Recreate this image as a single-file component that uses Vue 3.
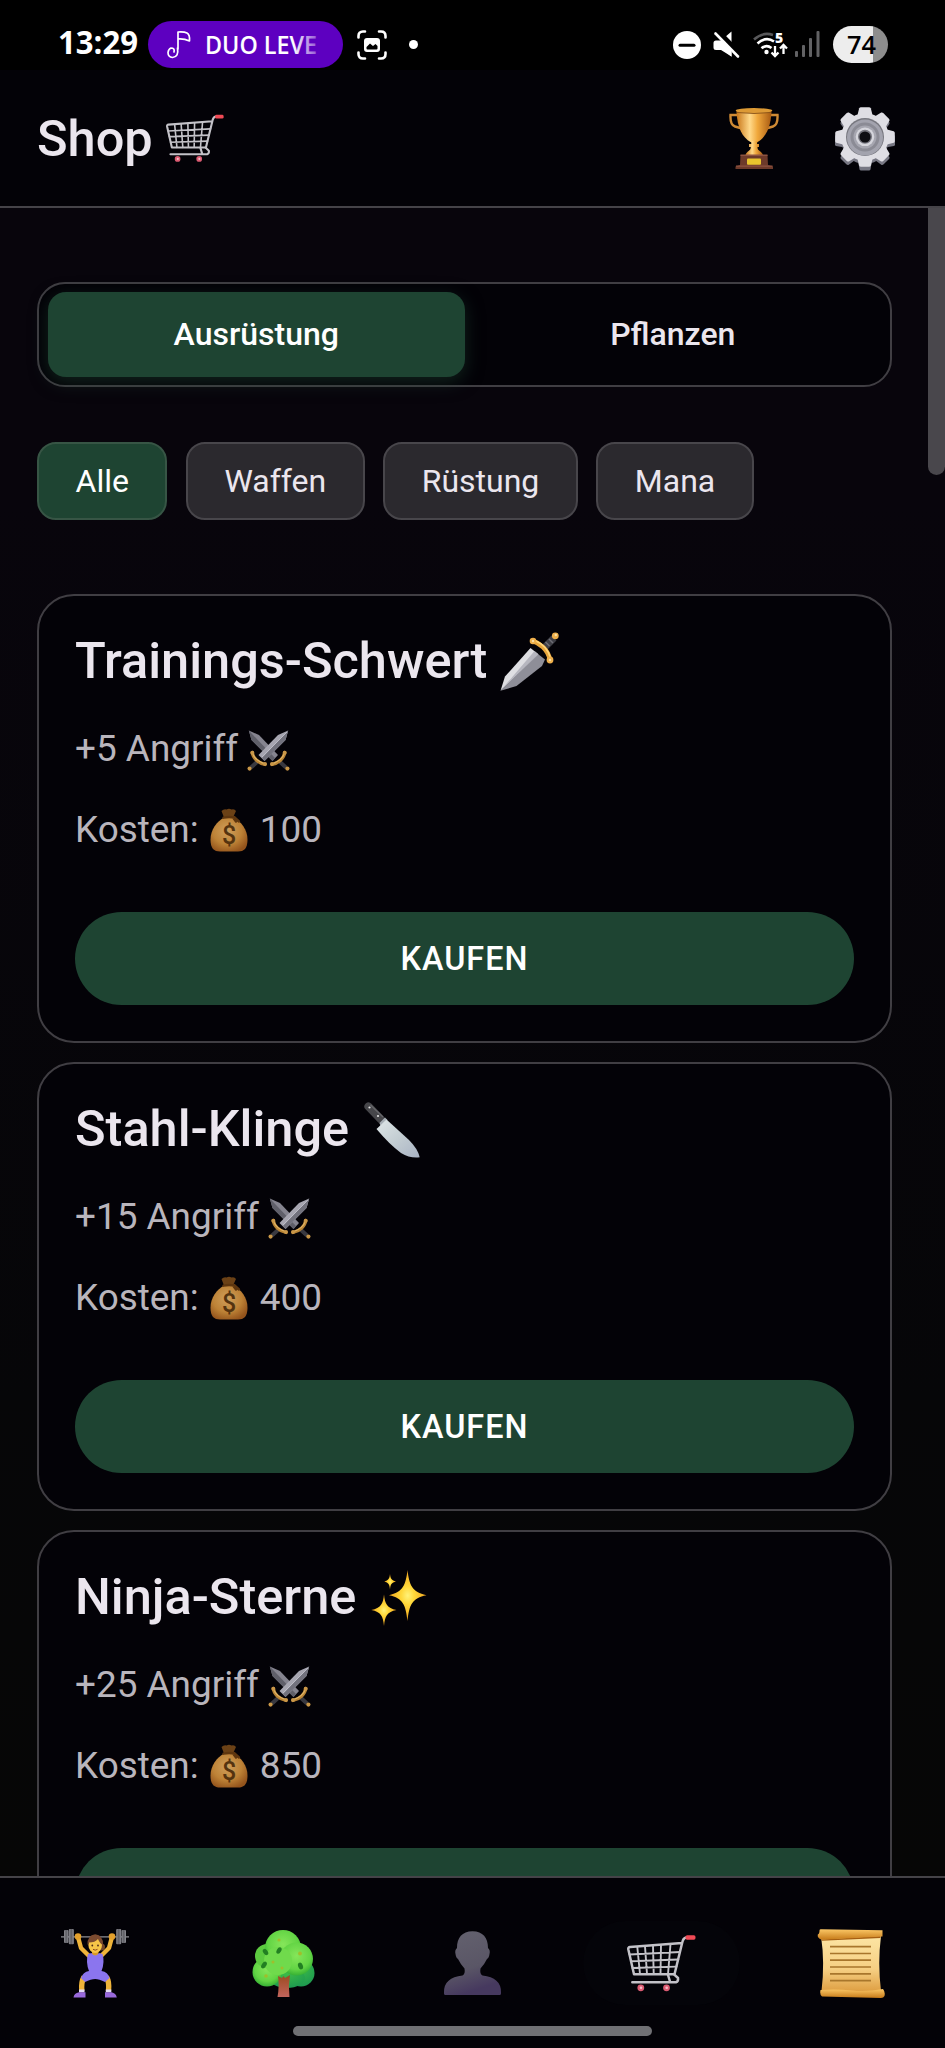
<script setup>
import { ref } from 'vue'

const tabs = ['Ausrüstung', 'Pflanzen']
const activeTab = ref('Ausrüstung')
const filters = ['Alle', 'Waffen', 'Rüstung', 'Mana']
const activeFilter = ref('Alle')
const items = [
  { name: 'Trainings-Schwert', icon: 'dagger', bonus: '+5 Angriff', cost: 100 },
  { name: 'Stahl-Klinge', icon: 'knife', bonus: '+15 Angriff', cost: 400 },
  { name: 'Ninja-Sterne', icon: 'sparkles', bonus: '+25 Angriff', cost: 850 },
]
const navItems = ['lifter', 'tree', 'bust', 'cart', 'scroll']
const activeNav = ref('cart')
</script>

<template>
  <div class="screen">
    <!-- Shared icon definitions -->
    <svg class="sprite" width="0" height="0" aria-hidden="true">
      <defs>
        <linearGradient id="gGold" x1="0" x2="1" y1="0" y2="0">
          <stop offset="0" stop-color="#c87618" /><stop offset=".38" stop-color="#ffd98a" />
          <stop offset=".6" stop-color="#f0a83c" /><stop offset="1" stop-color="#a85a12" />
        </linearGradient>
        <linearGradient id="gBlade" x1="0" x2="1" y1="0" y2="1">
          <stop offset="0" stop-color="#dfe6e8" /><stop offset=".5" stop-color="#c3cdd2" /><stop offset="1" stop-color="#a9b3c4" />
        </linearGradient>
        <radialGradient id="gStar">
          <stop offset="0" stop-color="#fff27a" /><stop offset=".35" stop-color="#ffd83a" /><stop offset="1" stop-color="#f0a31c" />
        </radialGradient>
        <radialGradient id="gBag" cx=".45" cy=".4" r=".65">
          <stop offset="0" stop-color="#cf9f5c" /><stop offset=".6" stop-color="#bd8236" /><stop offset="1" stop-color="#94541c" />
        </radialGradient>
        <radialGradient id="gLeaf" cx=".5" cy=".4" r=".6">
          <stop offset="0" stop-color="#86e65a" /><stop offset=".7" stop-color="#62d444" /><stop offset="1" stop-color="#36b034" />
        </radialGradient>
        <radialGradient id="gLeafDark" cx=".5" cy=".3" r=".7">
          <stop offset="0" stop-color="#3cba48" /><stop offset="1" stop-color="#1d9a50" />
        </radialGradient>
        <linearGradient id="gTrunk" x1="0" x2="0" y1="0" y2="1">
          <stop offset="0" stop-color="#9c4a20" /><stop offset="1" stop-color="#c2645c" />
        </linearGradient>
        <linearGradient id="gBust" x1="0" x2=".3" y1="0" y2="1">
          <stop offset="0" stop-color="#64626f" /><stop offset=".65" stop-color="#5a5666" /><stop offset="1" stop-color="#46395f" />
        </linearGradient>
        <linearGradient id="gPaper" x1="0" x2="0" y1="0" y2="1">
          <stop offset="0" stop-color="#fce5a4" /><stop offset=".6" stop-color="#f6cf83" /><stop offset="1" stop-color="#dfa044" />
        </linearGradient>
        <linearGradient id="gRoll" x1="0" x2="0" y1="0" y2="1">
          <stop offset="0" stop-color="#fbc766" /><stop offset="1" stop-color="#c67a18" />
        </linearGradient>
        <linearGradient id="gPlate" x1="0" x2="1" y1="0" y2="0">
          <stop offset="0" stop-color="#8a8a90" /><stop offset=".5" stop-color="#5e5e64" /><stop offset="1" stop-color="#8f8f96" />
        </linearGradient>
      </defs>

      <symbol id="cart" viewBox="0 0 69 57">
        <g fill="none" stroke="#c3c2c8" stroke-linecap="round" stroke-linejoin="round">
          <path stroke-width="2.5" d="M59 2.5Q56 3 55 8.5L47.5 39.2H7L1.3 14.2Q1 12.2 3 12L55 8" />
          <path stroke-width="1.9" d="M10.3 12L13 39M18 11.4L20 39M26 10.7L26.7 39M34 10L33.5 39M43.5 9L41 39M2.6 19.5L53 17M4 26.3L51.3 24.5M5.5 33L49.5 31.6" />
          <path stroke-width="2.5" d="M5.3 47.3H49Q51.5 46.5 51 43L47 39.3M41 40L43 46.5" />
        </g>
        <rect x="58.5" y=".3" width="10" height="4.4" rx="1.6" fill="#f04a55" />
        <g fill="#dc5b72"><circle cx="13.8" cy="52.8" r="3.4" /><circle cx="39.5" cy="52.8" r="3.4" /></g>
        <g fill="#f6bcc6"><circle cx="14" cy="52.8" r="1.3" /><circle cx="39.7" cy="52.8" r="1.3" /></g>
      </symbol>

      <symbol id="trophy" viewBox="0 0 50 61">
        <path fill="none" stroke="#cf8a34" stroke-width="2.4" d="M9 7H1.5Q1 17 6 18.5L13 20.5M41 7H48.5Q49 17 44 18.5L37 20.5" />
        <path fill="url(#gGold)" d="M7.5 3H42.5C42 20 36 30 28.5 34H21.5C14 30 8 20 7.5 3Z" />
        <ellipse cx="25" cy="2.6" rx="18.3" ry="2.6" fill="#dd9a35" />
        <path stroke="#875016" stroke-width=".9" d="M8 4.5Q25 6.5 42 4.5" fill="none" />
        <path fill="url(#gGold)" d="M22 33H28.5L28 36H30V39H28.5C28 43 33 43 34 47H16.5C17.5 43 22 43 21.8 39H20V36H22.3Z" />
        <path fill="#6d3a2a" d="M11.5 47H38.5L39 57L44 58.5V61H6.5V58.5L11 57Z" />
        <path fill="#8e5340" d="M11.5 46.5H38.5V48H11.5ZM7 57.5H43.5V58.7H7Z" />
        <rect x="18" y="50.5" width="14" height="6.3" rx="1" fill="#e8c42e" />
      </symbol>

      <symbol id="gear" viewBox="0 0 60 64">
        <g fill="#777783" transform="translate(30 33.5)">
          <circle r="23.5" />
          <path v-for="n in 8" :key="n" :transform="`rotate(${n * 45})`" d="M-7-20L-5.5-29Q-5-30-4-30H4Q5-30 5.5-29L7-20Z" />
        </g>
        <g fill="#dfdee4" transform="translate(30 30)">
          <circle r="23.8" />
          <path v-for="n in 8" :key="n" :transform="`rotate(${n * 45})`" d="M-8-20L-5.8-28.7Q-5.4-29.8-4-29.8H4Q5.4-29.8 5.8-28.7L8-20Z" />
        </g>
        <circle cx="30" cy="30" r="19" fill="#77777f" /><circle cx="30" cy="30.6" r="18" fill="#a3a3ae" />
        <circle cx="30" cy="30" r="14.5" fill="#8b8b95" /><circle cx="30" cy="30" r="11.5" fill="#a6a6b0" />
        <circle cx="30" cy="29.8" r="9.3" fill="#d5d5dc" /><circle cx="30" cy="29.8" r="7" fill="#74747d" />
        <circle cx="30" cy="30" r="5.5" fill="#0d0d12" />
      </symbol>

      <symbol id="dagger" viewBox="0 0 59 59">
        <path fill="#dedee2" d="M.5 58.7L5 44.5L30.5 16L38 22Z" />
        <path fill="#8e8e98" d="M.5 58.7L38 22L45 27.5L42 34L16.5 54Z" />
        <path fill="#b6b6bf" d="M.5 58.7L34.5 19L38.5 22.3Z" />
        <path stroke="#3e3e45" stroke-width="7" d="M44 16L54 6" />
        <path stroke="#6d6d75" stroke-width="1.5" d="M45.5 10l4 4M49 7l4 4" />
        <path fill="none" stroke="#e8a63c" stroke-width="4.6" stroke-linecap="round" d="M33 9C39 11 48 17 50 28" />
        <path fill="none" stroke="#ffd579" stroke-width="1.6" stroke-linecap="round" d="M35 8.5C41 11 48 17 50.5 26" />
        <g fill="#efb04c"><circle cx="33" cy="9" r="3.3" /><circle cx="50" cy="28" r="3.4" /><circle cx="55.3" cy="3.8" r="3.4" /></g>
        <g fill="#fbe0a4"><circle cx="33" cy="9" r="1.2" /><circle cx="50" cy="28" r="1.2" /><circle cx="55.8" cy="3" r="1.2" /></g>
      </symbol>

      <symbol id="knife" viewBox="0 0 56 56">
        <path stroke="#46464a" stroke-width="8.2" stroke-linecap="round" d="M4.5 4.5L17 17.5" />
        <path stroke="#67676b" stroke-width="1.2" d="M6.5 3L19 15" />
        <g fill="#e3e3e3"><circle cx="5.5" cy="5.5" r="1.1" /><circle cx="14" cy="14" r="1.1" /></g>
        <path fill="#a7afb6" d="M15.5 21L21 15.5L23.5 18L16.5 24Z" />
        <path fill="url(#gBlade)" d="M12.5 27L22.5 17.5L45 38Q54 47 55.7 55.3Q46 56.5 37 51Q25 42 12.5 27Z" />
      </symbol>

      <symbol id="sparkles" viewBox="0 0 56 56">
        <g fill="url(#gStar)">
          <path d="M36.5 0C38.2 15 41 22 55.5 25.2C41 28 38.2 35 36.5 51C34.8 35 32 28 18 25.2C32 22 34.8 15 36.5 0Z" />
          <path d="M13 24.5C14 34 16 38 25.5 40C16 42 14 46 13 56C12 46 10 42 .3 40C10 38 12 34 13 24.5Z" />
          <path d="M19 4C19.5 8.5 20.5 10.5 25 11.5C20.5 12.5 19.5 14.5 19 19.5C18.5 14.5 17.5 12.5 13.3 11.5C17.5 10.5 18.5 8.5 19 4Z" />
        </g>
      </symbol>

      <symbol id="swords" viewBox="0 0 43 41">
        <path fill="#85848f" d="M1.8.6L12 5L31 25L25.5 31L4.5 10Z" />
        <path fill="#5f5f69" d="M1.8.6L28 28L25.5 31L4.5 10Z" />
        <path fill="#a7a6b1" d="M41.2.6L31 5L11.5 25L17.5 31L38.5 10Z" />
        <path fill="#72727d" d="M41.2.6L15 28L17.5 31L38.5 10Z" />
        <path stroke="#c0bfca" stroke-width=".9" d="M40 2L15 27" />
        <g stroke="#393940" stroke-width="4"><path d="M10 32L4 37.5M33 32L39 37.5" /></g>
        <g fill="none" stroke="#b98435" stroke-width="3.3" stroke-linecap="round"><path d="M5.3 22.5C6 28 11 33 18 34.5M37.7 22.5C37 28 32 33 25 34.5" /></g>
        <g fill="none" stroke="#dfb467" stroke-width="1.1" stroke-linecap="round"><path d="M6 24C7 28 12 32 17 33.5M37 24C36 28 31 32 26 33.5" /></g>
        <g fill="#c99748"><circle cx="2.6" cy="38.6" r="2.1" /><circle cx="40.4" cy="38.6" r="2.1" /><circle cx="5.3" cy="22.8" r="2" /><circle cx="37.7" cy="22.8" r="2" /><circle cx="18" cy="34" r="2" /><circle cx="25" cy="34" r="2" /></g>
      </symbol>

      <symbol id="bag" viewBox="0 0 38 43">
        <path fill="#6b4116" d="M14 9L11.5 2.5Q14 0 16.5 1Q19 -.5 21.5 1Q24.5 0 26 2.5L23 9Z" />
        <path fill="url(#gBag)" d="M14 9Q18.5 7 23.5 9C31 13 37.5 21 37.5 31C37.5 40 34 43 28 43H10C4 43 .5 40 .5 31C.5 21 7 13 14 9Z" />
        <path fill="none" stroke="#5e360f" stroke-width="2.4" stroke-linecap="round" d="M13.5 9.2Q19 7.8 25 9.2M24 8.5L29 13M23 9L26 13" />
        <text x="19" y="35" text-anchor="middle" font-family="Roboto, sans-serif" font-size="25" font-weight="500" fill="#54330f">$</text>
      </symbol>

      <symbol id="lifter" viewBox="0 0 68 69">
        <path stroke="#8f8f95" stroke-width="1.2" d="M0 7.8H68" />
        <g fill="url(#gPlate)"><rect x="3" y="1" width="4.4" height="13" rx="1" /><rect x="7.8" width="5" height="15.3" rx="1" /><rect x="55.2" width="5" height="15.3" rx="1" /><rect x="60.6" y="1" width="4.4" height="13" rx="1" /></g>
        <circle cx="40.5" cy="18" r="3.5" fill="#74462a" />
        <g fill="none" stroke="#efb43a" stroke-width="4.4" stroke-linejoin="round"><path d="M17 8L20 19L29 28M51 8L48 19L39 28" /></g>
        <g fill="#e3a02c"><circle cx="17" cy="7.5" r="3.3" /><circle cx="51" cy="7.5" r="3.3" /></g>
        <rect x="31" y="20" width="6.5" height="8" fill="#d99a28" />
        <ellipse cx="34.2" cy="16" rx="6.8" ry="8" fill="#f7c548" />
        <path fill="#7c4b30" d="M26.5 16Q26 6 34.2 5.2Q42.5 6 42 16Q39 15 37 10Q34 13.5 28 13.5Z" />
        <g fill="#4b2a18"><circle cx="31.3" cy="16.5" r=".9" /><circle cx="37" cy="16.5" r=".9" /></g>
        <path stroke="#8f4a1d" stroke-width="1" fill="none" d="M32 20.3Q34.2 22 36.5 20.3" />
        <g fill="none" stroke="#efb43a" stroke-width="5.4"><path d="M23 48Q20 53 20.8 62M45.5 48Q48.5 53 47.5 62" /></g>
        <path fill="#8b75ee" d="M27 25L30.5 24Q34 29 38 24L41.5 25Q44 33 40.5 42Q47 43 48.5 49L44 53Q38 50 34.2 50Q30 50 24 53L20 49Q22 43 28 42Q24.5 33 27 25Z" />
        <path fill="#e5dcf5" d="M18 60.5h5.5v3H18zM44.8 60.5h5.5v3h-5.5z" />
        <path fill="#9869dc" d="M12.5 68.5Q13 64 18 63.2H24.5V68.5ZM55.8 68.5Q55 64 50.5 63.2H44V68.5Z" />
      </symbol>

      <symbol id="tree" viewBox="0 0 63 67">
        <g fill="url(#gLeafDark)"><circle cx="49" cy="43" r="13.500" /><ellipse cx="35" cy="48" rx="18" ry="10" /></g>
        <circle cx="15" cy="42" r="14.500" fill="url(#gLeaf)" /><circle cx="15" cy="26" r="12" fill="#5cca40" />
        <circle cx="31" cy="18" r="18" fill="url(#gLeaf)" /><circle cx="44.500" cy="29" r="16.500" fill="url(#gLeaf)" />
        <circle cx="26" cy="31" r="14" fill="#70da4c" />
        <path fill="url(#gTrunk)" d="M26 46L30 48L31.5 46L33 48L38 45Q36 56 37.5 67H25.5Q27.500 56 26 46Z" />
        <g fill="#227f22"><ellipse cx="13.500" cy="22" rx="2.200" ry="3.500" transform="rotate(-35 13.500 22)" /><ellipse cx="27" cy="20.500" rx="2.200" ry="3.500" transform="rotate(30 27 20.500)" /><ellipse cx="12" cy="35" rx="2.200" ry="3.800" transform="rotate(35 12 35)" /><ellipse cx="48.500" cy="36" rx="2.400" ry="3.500" transform="rotate(-20 48.500 36)" /></g>
        <g fill="#a1bd2c"><circle cx="27" cy="10" r="1.600" /><circle cx="48" cy="23.500" r="1.900" /><circle cx="14" cy="46" r="1.800" /><circle cx="30" cy="38" r="1.500" /><circle cx="21" cy="32" r="1.500" /></g>
      </symbol>

      <symbol id="bust" viewBox="0 0 57 64">
        <path fill="url(#gBust)" d="M28.5.3C39 .3 44 7 44 17Q46.5 19 45.5 23Q45 27 43 28Q40 34 36.5 37.5Q35.5 43 38.5 44.5Q57 46.5 57 61V62.5Q57 64 55.5 64H1.5Q0 64 0 62.5V61Q0 46.5 18.5 44.5Q21.5 43 20.5 37.5Q17 34 14 28Q12 27 11.5 23Q10.5 19 13 17C13 7 18 .3 28.5 .3Z" />
      </symbol>

      <symbol id="scroll" viewBox="0 0 68 69">
        <path fill="url(#gPaper)" d="M4 7H64Q60.5 34 64 62H4.5Q8 34 4 7Z" />
        <path fill="#a65f12" d="M4 10.5L63.5 7V9L5 11.8Z" />
        <path fill="url(#gRoll)" d="M2.5 1.5Q2.5 0 4.5 .3L65.5 1.3V7.5L4.5 10.8Q0 9 .8 5.5Q2.5 5 2.5 1.5Z" />
        <path fill="url(#gRoll)" d="M3.5 61Q20 60 35 61.5T66 60Q68.5 63 67.5 67Q66.5 69 64 69L5 67.5Q2.5 66 3.5 61Z" />
        <path stroke="#a8762c" stroke-width="1.7" d="M13 17.7H54M13 24.5H54M13 31.2H54M13 38H54M13 44.8H54M13 51.7H54" />
      </symbol>
    </svg>

    <div class="status">
      <svg class="clock" width="84" height="34"><text x="0" y="26" textLength="80" lengthAdjust="spacingAndGlyphs">13:29</text></svg>
      <div class="media">
        <svg width="24" height="28" viewBox="0 0 24 28" fill="none" stroke="#fff" stroke-width="1.7" stroke-linecap="round" stroke-linejoin="round">
          <path d="M11 1V18M11 1Q17 .5 20 2Q23 3.5 22.5 10Q17 7.5 11 8M10.5 17Q12 26 5.5 26.5Q1 26 1 21.5Q1.5 18 4 17Q8 17 7 21" />
        </svg>
        <svg class="song" width="118" height="32">
          <defs><linearGradient id="gFade" x1="0" x2="118" y1="0" y2="0" gradientUnits="userSpaceOnUse"><stop offset=".74" stop-color="#fff" /><stop offset="1" stop-color="#fff" stop-opacity=".15" /></linearGradient></defs>
          <text x="-1" y="25" textLength="112" lengthAdjust="spacingAndGlyphs">DUO LEVE</text>
        </svg>
      </div>
      <svg class="capture" width="30" height="30" viewBox="0 0 30 30">
        <path fill="none" stroke="#fff" stroke-width="2.6" stroke-linecap="round" d="M1.5 7.5V6Q1.5 1.5 6 1.5H8M22 1.5H24Q28.5 1.5 28.5 6V7.5M28.5 22.5V24Q28.5 28.5 24 28.5H22M8 28.5H6Q1.5 28.5 1.5 24V22.5" />
        <rect x="7" y="8" width="16" height="14" rx="3" fill="#fff" />
        <path fill="#000" d="M9.5 18.5V17L13 13.5L16 16L18.5 14L20.5 16V18.5Q20.5 19.5 19.5 19.5H10.5Q9.5 19.5 9.5 18.5Z" />
      </svg>
      <i class="dot"></i>
      <svg class="dnd" width="28" height="28"><circle cx="14" cy="14" r="14" fill="#fff" /><path stroke="#000" stroke-width="3" stroke-linecap="round" d="M7 14.2H21" /></svg>
      <svg class="mute" width="27" height="28" viewBox="0 0 27 28">
        <path fill="#fff" d="M3 9.5H8L18.5 .5V25.5L8 19H3Q.5 19 .5 16.5V12Q.5 9.5 3 9.5Z" />
        <path stroke="#000" stroke-width="6" d="M3.5 -.5L28 24.5" /><path stroke="#fff" stroke-width="2.6" stroke-linecap="round" d="M2.5 2.5L25 25.5" />
        <path fill="#fff" d="M8 17L18.5 25.8V21L9 11Z" />
      </svg>
      <svg class="wifi" width="35" height="28" viewBox="0 0 35 28">
        <g fill="none" stroke="#fff" stroke-width="2.6"><path stroke="#58585a" d="M1 8.5Q10 .5 20 4" /><path d="M4.5 12.5Q13 5 21 10.5M8.500 17.200Q13.500 13 18.500 17" /></g>
        <circle cx="13.5" cy="21" r="2.2" fill="#fff" />
        <text x="22" y="12" class="band">5</text>
        <path fill="none" stroke="#fff" stroke-width="2.3" d="M22 15V25M18.5 21.5L22 25L25.5 21.5M30.5 23V14M27 17.5L30.5 14L34 17.5" />
      </svg>
      <svg class="signal" width="25" height="27" fill="#626264"><rect y="20" width="3" height="6" rx="1" /><rect x="7" y="14" width="3" height="12" rx="1" /><rect x="14" y="7" width="3" height="19" rx="1" /><rect x="21.5" width="3" height="26" rx="1" /></svg>
      <div class="battery"><svg width="30" height="28"><text x="0" y="23" textLength="29" lengthAdjust="spacingAndGlyphs">74</text></svg></div>
    </div>

    <header class="header">
      <h1>Shop</h1>
      <svg class="header-cart"><use href="#cart" /></svg>
      <svg class="trophy"><use href="#trophy" /></svg>
      <svg class="gear"><use href="#gear" /></svg>
    </header>

    <main class="content">
      <div class="tabs">
        <button v-for="tab in tabs" :key="tab" :class="{ active: tab === activeTab }" @click="activeTab = tab">{{ tab }}</button>
      </div>
      <div class="filters">
        <button v-for="f in filters" :key="f" :class="{ active: f === activeFilter }" @click="activeFilter = f">{{ f }}</button>
      </div>
      <section class="cards">
        <article v-for="item in items" :key="item.name" class="card">
          <h2><span>{{ item.name }}</span><svg class="item-icon" :class="item.icon"><use :href="'#' + item.icon" /></svg></h2>
          <p><span>{{ item.bonus }}</span><svg class="swords"><use href="#swords" /></svg></p>
          <p class="cost"><span>Kosten:</span><svg class="bag"><use href="#bag" /></svg><span>{{ item.cost }}</span></p>
          <button class="buy">KAUFEN</button>
        </article>
      </section>
      <i class="scrollbar"></i>
    </main>

    <nav class="nav">
      <button v-for="n in navItems" :key="n" :class="{ active: n === activeNav }" @click="activeNav = n">
        <svg :class="n"><use :href="'#' + n" /></svg>
      </button>
      <i class="home"></i>
    </nav>
  </div>
</template>

<style>
html, body { background: #000; overflow: hidden; }
</style>

<style scoped>
.screen {
  width: 945px; height: 2048px; overflow: hidden; display: flex; flex-direction: column;
  background: linear-gradient(#08050c 0, #08050c 500px, #060608 1400px, #060606 1876px);
  color: #ebe6ee; font-family: Roboto, sans-serif;
}
* { box-sizing: border-box; }
svg { display: block; flex: none; overflow: visible; }
.sprite { position: absolute; }
button { font: inherit; color: inherit; border: 0; background: none; padding: 0; margin: 0; }
h1, h2, p { margin: 0; }

.status { height: 70px; flex: none; background: #000; display: flex; align-items: center; padding: 19px 57px 0 58px; }
.status text { font-family: "Open Sans", sans-serif; fill: #fff; }
.clock { margin-top: 1px; }
.clock text { font-size: 32px; font-weight: 700; }
.media { width: 195px; height: 47px; margin-left: 6px; border-radius: 24px; background: #5d00c0; display: flex; align-items: center; padding-left: 19px; }
.song { margin-left: 15px; }
.song text { font-size: 26px; font-weight: 600; fill: url(#gFade); }
.capture { margin-left: 14px; }
.dot { width: 9px; height: 9px; border-radius: 50%; background: #fff; margin-left: 22px; }
.dnd { margin-left: auto; }
.mute { margin-left: 12px; }
.wifi { margin-left: 13px; }
.status .band { font-size: 14px; font-weight: 800; }
.signal { margin-left: 7px; }
.battery { width: 55px; height: 37px; margin-left: 13px; border-radius: 19px; background: linear-gradient(90deg, #ededed 40px, #8d8d8d 40px); display: flex; align-items: center; padding-left: 14px; }
.battery text { fill: #000; font-size: 26px; font-weight: 600; }

.header { height: 138px; flex: none; background: #030207; border-bottom: 2px solid #454348; display: flex; align-items: center; padding: 1px 50px 0 37px; }
h1 { font-size: 50.5px; font-weight: 500; line-height: 60px; }
.header-cart { width: 58px; height: 49px; margin-left: 13px; }
.trophy { width: 50px; height: 61px; margin-left: auto; }
.gear { width: 60px; height: 64px; margin-left: 56px; }

.content { position: relative; flex: 1; min-height: 0; overflow: hidden; padding: 74px 53px 0 37px; }
.tabs { height: 105px; border: 2px solid #403e43; border-radius: 28px; background: #030207; padding: 8px 9px; display: grid; grid-template-columns: 1fr 1fr; }
.tabs button { border-radius: 18px; font-size: 32px; font-weight: 500; padding-bottom: 1px; }
.tabs .active { background: #1e4432; color: #fff; box-shadow: 0 5px 18px rgba(30, 68, 50, .5); }
.filters { display: flex; gap: 18.5px; margin-top: 55px; }
.filters button { height: 78px; padding: 0 36.5px; border: 2px solid #48464b; border-radius: 19px; background: #2b292e; font-size: 32px; }
.filters .active { background: #1e4432; border-color: #375545; color: #fff; }
.cards { display: flex; flex-direction: column; gap: 19.2px; margin-top: 74px; }
.card { height: 449px; flex: none; border: 2px solid #403e43; border-radius: 37px; background: #030207; padding: 35px 36px; }
.card h2 { height: 60px; display: flex; align-items: center; font-size: 50.5px; font-weight: 500; line-height: 60px; }
.item-icon { width: 56px; height: 56px; margin: 1px 0 0 15px; }
.item-icon.dagger { width: 59px; height: 59px; margin: 1px 0 0 13px; }
.card p { height: 56px; display: flex; align-items: center; margin-top: 30px; font-size: 36.9px; line-height: 56px; color: #b9b5bc; }
.card .cost { margin-top: 24.5px; }
.swords { width: 43px; height: 41px; margin: 2px 0 0 9px; }
.bag { width: 38px; height: 44px; margin: 1px 12px 0 11px; }
.buy { display: block; width: 100%; height: 93px; margin-top: 54.5px; border-radius: 47px; background: #1e4432; color: #fff; font-size: 32.4px; font-weight: 500; letter-spacing: 1px; }
.scrollbar { position: absolute; top: 0; right: 0; width: 17px; height: 267px; background: #49474c; border-radius: 0 0 9px 9px; }

.nav { position: relative; height: 172px; flex: none; background: #030207; border-top: 2px solid #454348; display: grid; grid-template-columns: repeat(5, 1fr); }
.nav button { width: 157px; height: 84px; margin-top: 43px; justify-self: center; display: flex; align-items: center; justify-content: center; border-radius: 42px; }
.nav .active { background: #040409; }
.nav .lifter, .nav .scroll { width: 68px; height: 69px; }
.nav .tree { width: 63px; height: 67px; }
.nav .bust { width: 57px; height: 64px; }
.nav .cart { width: 69px; height: 57px; }
.home { position: absolute; left: 293px; bottom: 12px; width: 359px; height: 10px; border-radius: 5px; background: #707074; }
</style>
